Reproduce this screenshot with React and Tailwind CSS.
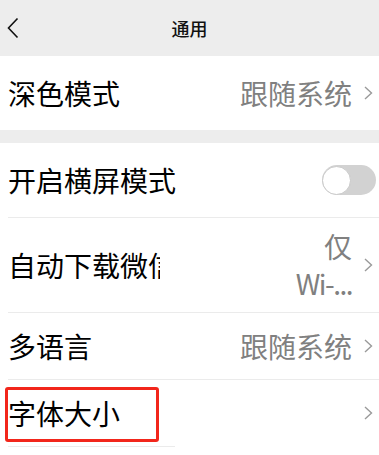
import React from "react";

const font = { fontFamily: '"Noto Sans CJK SC", "Noto Sans", sans-serif' };

function Chevron() {
  return (
    <svg width="9" height="14" viewBox="0 0 9 14" className="shrink-0">
      <path d="M1 1 L7.5 7 L1 13" fill="none" stroke="#9a9a9a" strokeWidth="1.4" />
    </svg>
  );
}

function Divider({ className = "" }) {
  return <div className={"ml-2 h-px bg-[#ebebeb] " + className} />;
}

export default function App() {
  return (
    <div className="w-[379px] h-[455px] bg-white overflow-hidden text-black" style={font}>
      <div className="h-[56px] bg-[#ededed] grid grid-cols-[1fr_auto_1fr] items-center">
        <div className="pl-[7px] flex items-center">
          <svg width="12" height="22" viewBox="0 0 12 22">
            <path d="M10.5 1.5 L1.5 11 L10.5 20.5" fill="none" stroke="#111" strokeWidth="1.6" />
          </svg>
        </div>
        <div className="text-[18px] leading-none font-medium text-[#111]">通用</div>
        <div />
      </div>

      <div className="h-[74px] flex items-center justify-between pl-2 pr-[6px]">
        <span className="text-[28px] leading-none">深色模式</span>
        <div className="flex items-center gap-[12px]">
          <span className="text-[28px] leading-none text-[#808080]">跟随系统</span>
          <Chevron />
        </div>
      </div>

      <div className="h-[13px] bg-[#ededed]" />

      <div className="h-[74px] flex items-center justify-between pl-2 pr-[3px]">
        <span className="text-[28px] leading-none">开启横屏模式</span>
        <div className="w-[54px] h-[30px] rounded-full bg-[#d2d2d2] flex items-center">
          <div className="w-[29px] h-[29px] rounded-full bg-white border border-[#c9c9c9]" />
        </div>
      </div>
      <Divider />

      <div className="h-[94px] flex items-center justify-between pl-2 pr-[6px]">
        <span className="text-[28px] leading-none w-[152px] overflow-hidden whitespace-nowrap">自动下载微信</span>
        <div className="flex items-center gap-[12px]">
          <div className="text-[28px] leading-[37px] text-[#808080] text-right flex flex-col items-end">
            <span>仅</span>
            <span className="tracking-[-1.5px]">Wi-...</span>
          </div>
          <Chevron />
        </div>
      </div>
      <Divider />

      <div className="h-[66px] flex items-center justify-between pl-2 pr-[6px]">
        <span className="text-[28px] leading-none">多语言</span>
        <div className="flex items-center gap-[12px]">
          <span className="text-[28px] leading-none text-[#808080]">跟随系统</span>
          <Chevron />
        </div>
      </div>
      <Divider />

      <div className="relative h-[66px] flex items-center justify-between pl-2 pr-[6px]">
        <span className="text-[28px] leading-none">字体大小</span>
        <Chevron />
        <div className="absolute left-[5px] top-[7px] w-[154px] h-[55px] border-[3px] border-[#f2261b] rounded-[3px]" />
      </div>
      <Divider className="w-[167px]" />
    </div>
  );
}
